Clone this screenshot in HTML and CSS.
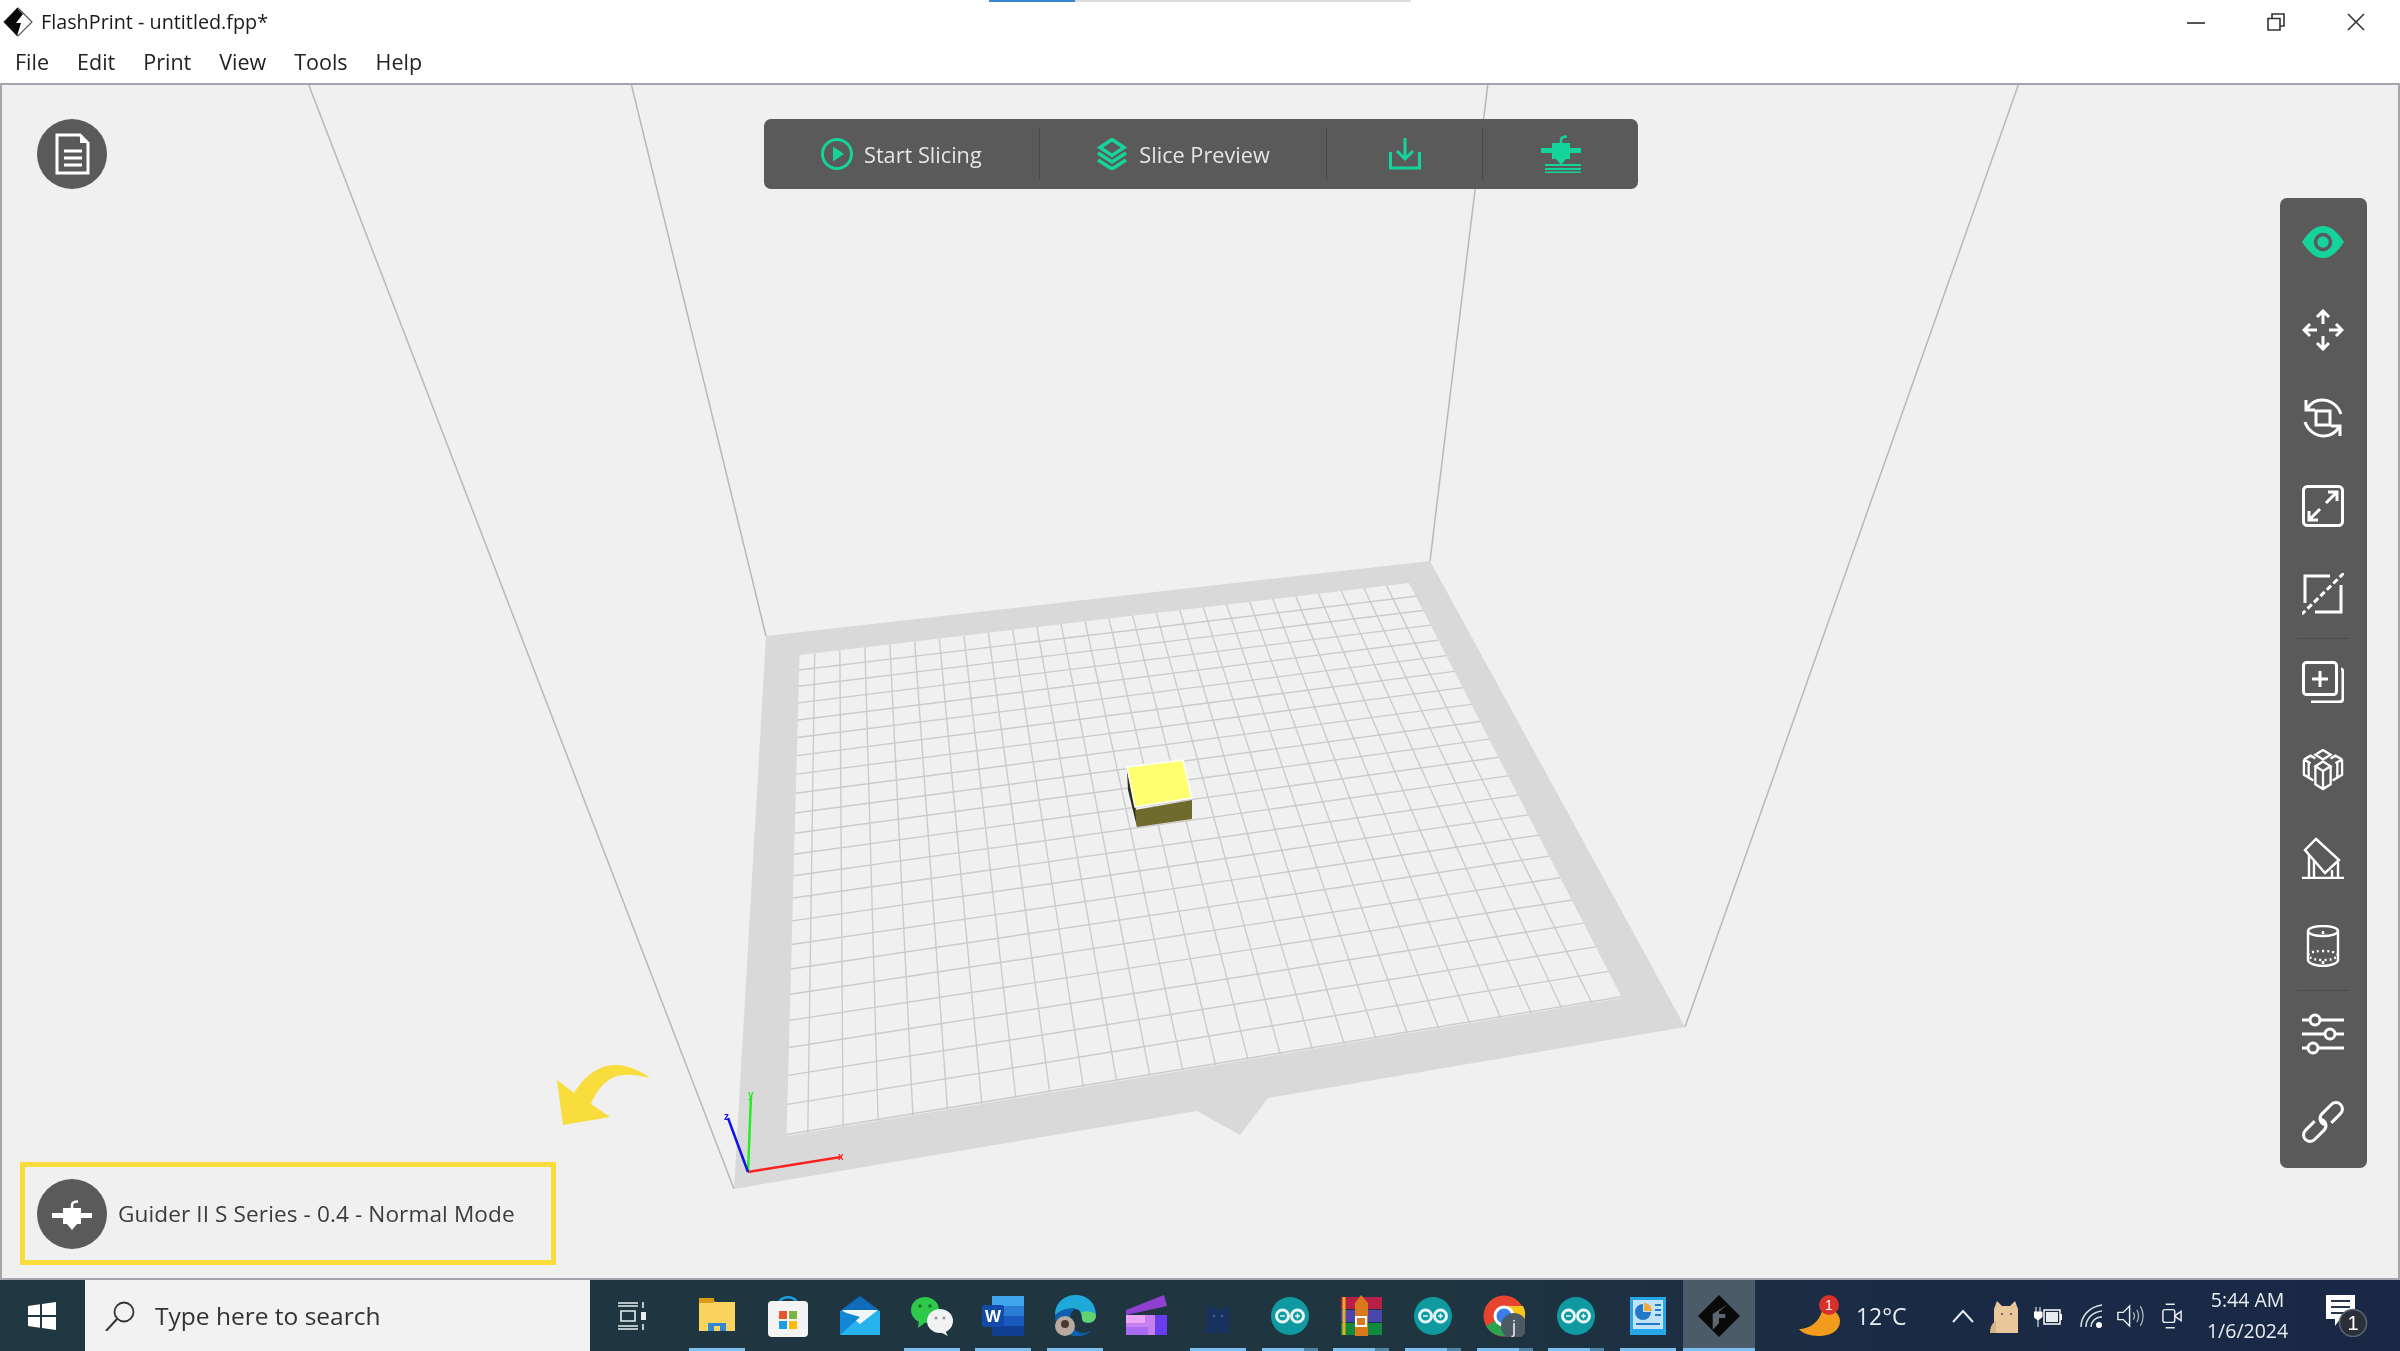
FILE: index.html
```html
<!DOCTYPE html>
<html>

<head>
    <title>FlashPrint - untitled.fpp*</title>
    <link rel="stylesheet" href="styles.css">
</head>

<body>
    <svg class="defs" width="0" height="0">
        <symbol id="nozzle" viewBox="0 0 40 30">
            <path d="M20 9V5Q20 1.500 26 1.500" fill="none" stroke="currentColor" stroke-width="2.500"/>
            <path d="M0 13H11V8H29V13H40V18H29V24H25L20 30L15 24H11V18H0Z" fill="currentColor"/>
        </symbol>
        <symbol id="arduino" viewBox="0 0 42 42">
            <circle cx="21" cy="21" r="19" fill="#0f9aa2"/>
            <g fill="none" stroke="#e6f5f5" stroke-width="3">
                <circle cx="13.500" cy="21" r="6"/>
                <circle cx="28.500" cy="21" r="6"/>
            </g>
            <path d="M11 21H16M26 21H31M28.500 18.500V23.500" stroke="#e6f5f5" stroke-width="1.500"/>
        </symbol>
        <symbol id="diamond" viewBox="0 0 40 40">
            <path d="M20 0L40 20L20 40L0 20Z" fill="#0a0a0a"/>
            <path d="M28 9L14 18V33L20 27V22H26V18H20V16Z" fill="#5a6773"/>
        </symbol>
    </svg>

    <div class="progress-strip"><span class="progress-done"></span></div>

    <header class="title-bar">
        <svg class="app-logo" viewBox="0 0 30 30">
            <path d="M15 1L29 15L15 29L1 15Z" fill="#fff" stroke="#555" stroke-width="1.200"/>
            <path d="M14 1L1 15L14 29L18 16H13L20 7Z" fill="#0a0a0a"/>
        </svg>
        <span class="app-title">FlashPrint - untitled.fpp*</span>
        <div class="window-btns">
            <svg class="window-btn" viewBox="0 0 18 18"><path d="M0 10H18" stroke="#555" stroke-width="2"/></svg>
            <svg class="window-btn" viewBox="0 0 18 18">
                <path d="M1 5.500H13V17H1ZM5 5V1H17V13H13" fill="none" stroke="#333" stroke-width="1.600"/>
            </svg>
            <svg class="window-btn" viewBox="0 0 18 18"><path d="M1 1L17 17M17 1L1 17" stroke="#333" stroke-width="1.600"/></svg>
        </div>
    </header>

    <nav class="menu-bar">
        <span class="menu-item">File</span>
        <span class="menu-item">Edit</span>
        <span class="menu-item">Print</span>
        <span class="menu-item">View</span>
        <span class="menu-item">Tools</span>
        <span class="menu-item">Help</span>
    </nav>

    <main class="viewport">
        <!-- the 3D bed, coordinates are the page's own -->
        <svg class="scene" viewBox="2 85 2396 1193">
            <g class="wall">
                <line x1="308" y1="83" x2="734" y2="1189"/>
                <line x1="631" y1="83" x2="766" y2="636"/>
                <line x1="1488" y1="83" x2="1430" y2="561"/>
                <line x1="2019" y1="83" x2="1685" y2="1027"/>
            </g>
            <polygon class="bed" points="766,636 1430,561 1685,1027 1268,1098 1240,1135 1197,1111 734,1189"/>
            <polygon class="bed-inner" points="799.500,655 1409,583 1622,998 786.500,1136"/>
            <g id="grid" class="grid"></g>

            <polygon points="1127,770 1136,810 1137,827 1128,790" fill="#2e2e18"/>
            <polygon points="1135,810 1192,800 1192,819 1137,827" fill="#6f6b2d"/>
            <polygon points="1127,767 1183,760 1192,798 1135,807" fill="#ffff70" stroke="#fff" stroke-width="1.500"/>

            <line x1="748" y1="1172" x2="841" y2="1157" stroke="#f22" stroke-width="2.500"/>
            <line x1="748" y1="1172" x2="751" y2="1096" stroke="#2e2" stroke-width="2.500"/>
            <line x1="748" y1="1172" x2="728" y2="1118" stroke="#11e" stroke-width="2.500"/>
            <text class="axis-label" x="838" y="1160" fill="#f22">x</text>
            <text class="axis-label" x="748" y="1098" fill="#2e2">y</text>
            <text class="axis-label" x="724" y="1120" fill="#11e">z</text>

            <path class="hint-arrow" d="M563 1125L557 1080L574 1093C584 1076 600 1064 617 1065C631 1066 642 1072 650 1078C638 1075 626 1073 614 1077C603 1082 596 1092 591 1104L610 1117Z"/>
        </svg>

        <div class="round-btn round-btn--doc">
            <svg class="doc-icon" viewBox="0 0 35 42">
                <path d="M2 2H25L33 10V40H2Z" fill="none" stroke="#fff" stroke-width="3"/>
                <path d="M25 2V10H33Z" fill="#fff"/>
                <path d="M9 18H27M9 25H27M9 32H27" stroke="#fff" stroke-width="3"/>
            </svg>
        </div>

        <div class="slice-bar">
            <div class="slice-item slice-item--start">
                <svg class="slice-icon" viewBox="0 0 32 32">
                    <circle cx="16" cy="16" r="14.500" fill="none" stroke="#14d49b" stroke-width="3"/>
                    <path d="M12 8.500L23 16L12 23.500Z" fill="#14d49b"/>
                </svg>
                <span>Start Slicing</span>
            </div>
            <i class="bar-sep"></i>
            <div class="slice-item slice-item--preview">
                <svg class="slice-icon" viewBox="0 0 32 32">
                    <path d="M16 1.500L28 9.500L16 17.500L4 9.500Z" fill="none" stroke="#14d49b" stroke-width="3.500"/>
                    <path d="M2 15L16 24L30 15M2 22L16 31L30 22" fill="none" stroke="#14d49b" stroke-width="3.500"/>
                </svg>
                <span>Slice Preview</span>
            </div>
            <i class="bar-sep"></i>
            <div class="slice-item slice-item--small">
                <svg class="slice-icon" viewBox="0 0 32 32">
                    <path d="M16 0V20M8 13L16 21L24 13" fill="none" stroke="#14d49b" stroke-width="3"/>
                    <path d="M1.500 14V30H30.500V14" fill="none" stroke="#14d49b" stroke-width="3"/>
                </svg>
            </div>
            <i class="bar-sep"></i>
            <div class="slice-item slice-item--small">
                <svg class="machine-icon" viewBox="0 0 40 38">
                    <use href="#nozzle" width="40" height="30"/>
                    <path d="M4 30H40M4 34H40M4 37.500H40" stroke="#14d49b" stroke-width="2"/>
                </svg>
            </div>
        </div>

        <aside class="tool-panel">
            <div class="tool">
                <svg viewBox="0 0 42 42">
                    <path d="M0 21C8 9 14 5 21 5C28 5 34 9 42 21C34 33 28 37 21 37C14 37 8 33 0 21Z" fill="#14d49b"/>
                    <circle cx="21" cy="21" r="7.500" fill="#14d49b" stroke="#5a5a5a" stroke-width="3.500"/>
                </svg>
            </div>
            <div class="tool">
                <svg class="tool-line" viewBox="0 0 42 42">
                    <path d="M21 15V2M15 8L21 2L27 8M21 27V40M15 34L21 40L27 34M15 21H2M8 15L2 21L8 27M27 21H40M34 15L40 21L34 27"/>
                </svg>
            </div>
            <div class="tool">
                <svg class="tool-line" viewBox="0 0 42 42">
                    <rect x="14" y="14" width="14" height="14"/>
                    <path d="M39 17C36 8 28 3 20 3C13 3 8 7 5 12M4 3V13H13"/>
                    <path d="M3 25C6 34 14 39 22 39C29 39 34 35 37 30M38 39V29H29"/>
                </svg>
            </div>
            <div class="tool">
                <svg class="tool-line" viewBox="0 0 42 42">
                    <rect x="1.500" y="1.500" width="39" height="39" rx="4"/>
                    <path d="M24 18L35 7M26 7H35V16M18 24L7 35M7 26V35H16"/>
                </svg>
            </div>
            <div class="tool">
                <svg class="tool-line" viewBox="0 0 42 42">
                    <path d="M28 3H3V30M13 39H39V12"/>
                    <path d="M42 0L0 41" stroke-dasharray="6 3"/>
                </svg>
            </div>
            <i class="tool-sep"></i>
            <div class="tool">
                <svg class="tool-line" viewBox="0 0 42 42">
                    <rect x="1.500" y="1.500" width="33" height="32" rx="3"/>
                    <path d="M18 10V26M10 18H26"/>
                    <path d="M39 8Q41 8 41 12V37Q41 41 37 41H9"/>
                </svg>
            </div>
            <div class="tool">
                <svg class="tool-line tool-line--thin" viewBox="0 0 42 44">
                    <path d="M21 1L29 6L21 11L13 6Z"/>
                    <path d="M21 13L29 18L21 23L13 18ZM13 18V37L21 42L29 37V18M21 23V42"/>
                    <path d="M1 11L8 7L13 10M1 11L8 15M1 11V27L11 33M6 14V30"/>
                    <path d="M41 11L34 7L29 10M41 11L34 15M41 11V27L31 33M36 14V30"/>
                </svg>
            </div>
            <div class="tool">
                <svg class="tool-line tool-line--thin" viewBox="0 0 42 42">
                    <path d="M14 2L37 23L23 36L3 13Z"/>
                    <path d="M0 41H42M7 18V41M12 23V41M30 33V41M36 25V41"/>
                </svg>
            </div>
            <div class="tool">
                <svg class="tool-line tool-line--thin" viewBox="0 0 42 42">
                    <ellipse cx="21" cy="6" rx="15" ry="5"/>
                    <path d="M6 6V35C6 38 13 41 21 41C29 41 36 38 36 35V6"/>
                    <path d="M6 30C8 27 14 26 21 26C28 26 34 27 36 30C34 34 28 35 21 35C14 35 8 34 6 30Z" stroke-dasharray="2 3"/>
                    <path d="M21 6V9M21 36V39"/>
                </svg>
            </div>
            <i class="tool-sep"></i>
            <div class="tool">
                <svg class="tool-line" viewBox="0 0 42 42">
                    <path d="M0 7H42M0 21H42M0 35H42"/>
                    <circle class="knob" cx="13" cy="7" r="5"/>
                    <circle class="knob" cx="28" cy="21" r="5"/>
                    <circle class="knob" cx="11" cy="35" r="5"/>
                </svg>
            </div>
            <div class="tool">
                <svg class="tool-line" viewBox="0 0 42 42">
                    <path transform="translate(13 29) rotate(-45)" d="M6 -6.500H-7A6.500 6.500 0 0 0 -7 6.500H7A6.500 6.500 0 0 0 12 -3"/>
                    <path transform="translate(29 13) rotate(135)" d="M6 -6.500H-7A6.500 6.500 0 0 0 -7 6.500H7A6.500 6.500 0 0 0 12 -3"/>
                </svg>
            </div>
        </aside>

        <div class="machine-chip">
            <div class="round-btn">
                <svg class="chip-nozzle"><use href="#nozzle" width="40" height="30"/></svg>
            </div>
            <span class="machine-name">Guider II S Series - 0.4 - Normal Mode</span>
        </div>
    </main>

    <footer class="taskbar">
        <div class="start-btn">
            <svg class="win-logo" viewBox="0 0 28 28">
                <path d="M0 4L12 2.300V13H0ZM14 2L28 0V13H14ZM0 15H12V25.700L0 24ZM14 15H28V28L14 26Z" fill="#fff"/>
            </svg>
        </div>
        <div class="search-box">
            <svg class="search-icon" viewBox="0 0 30 30">
                <circle cx="19" cy="11" r="9.500" fill="none" stroke="#333" stroke-width="1.800"/>
                <path d="M12 18L1 30" stroke="#333" stroke-width="2"/>
            </svg>
            <span>Type here to search</span>
        </div>
        <div class="task-view">
            <svg class="task-view-icon" viewBox="0 0 28 28">
                <path d="M0 1H20M0 4H20M0 24H20M0 27H20M3 9H17V19H3Z" fill="none" stroke="#e8eef0" stroke-width="1.600"/>
                <path d="M25 0V6M25 22V28" stroke="#e8eef0" stroke-width="1.600"/>
                <rect x="23" y="10" width="5" height="8" fill="#e8eef0"/>
            </svg>
        </div>

        <div class="task-slot task-slot--open">
            <svg viewBox="0 0 42 42">
                <path d="M3 3H16L19 7H39V36H3Z" fill="#fbd35f"/>
                <rect x="3" y="3" width="15" height="5" fill="#d99c12"/>
                <path d="M12 28H30V36H24V31H18V36H12Z" fill="#2f88d0"/>
            </svg>
        </div>
        <div class="task-slot">
            <svg viewBox="0 0 42 42">
                <path d="M12 9C12 0 30 0 30 9" fill="none" stroke="#1aa3e8" stroke-width="2.500"/>
                <rect x="1" y="6" width="40" height="36" rx="4" fill="#f4f4f4"/>
                <rect x="12" y="16" width="8" height="8" fill="#e8532b"/>
                <rect x="22" y="16" width="8" height="8" fill="#7cb342"/>
                <rect x="12" y="26" width="8" height="8" fill="#1ba1e2"/>
                <rect x="22" y="26" width="8" height="8" fill="#fbbc05"/>
            </svg>
        </div>
        <div class="task-slot">
            <svg viewBox="0 0 42 42">
                <path d="M1 16L21 1L41 16V40H1Z" fill="#0f6cbd"/>
                <path d="M1 16H41V40H1Z" fill="#27b4ee"/>
                <path d="M3 15H39L21 29Z" fill="#eef6fb"/>
                <path d="M1 40L21 22L1 16Z" fill="#1287d8"/>
            </svg>
        </div>
        <div class="task-slot task-slot--open">
            <svg viewBox="0 0 42 42">
                <ellipse cx="14" cy="15" rx="14" ry="13" fill="#2ec84a"/>
                <path d="M8 25L7 33L15 27Z" fill="#2ec84a"/>
                <ellipse cx="29" cy="26" rx="13" ry="12" fill="#f2f2f2"/>
                <path d="M34 36L37 41L29 37Z" fill="#f2f2f2"/>
                <circle cx="9" cy="11" r="1.800" fill="#157a2a"/>
                <circle cx="19" cy="11" r="1.800" fill="#157a2a"/>
                <circle cx="25" cy="23" r="1.500" fill="#999"/>
                <circle cx="33" cy="23" r="1.500" fill="#999"/>
            </svg>
        </div>
        <div class="task-slot task-slot--open">
            <svg viewBox="0 0 42 42">
                <rect x="10" y="1" width="32" height="40" rx="2" fill="#2b7cd3"/>
                <rect x="10" y="1" width="32" height="10" fill="#41a5ee"/>
                <rect x="10" y="21" width="32" height="10" fill="#185abd"/>
                <rect x="10" y="31" width="32" height="10" fill="#103f91"/>
                <rect x="0" y="10" width="22" height="22" rx="2" fill="#114aa8"/>
                <text class="word-letter" x="11" y="27">W</text>
            </svg>
        </div>
        <div class="task-slot task-slot--open">
            <svg viewBox="0 0 42 42">
                <path d="M1 20C1 8 10 0 22 0C34 0 42 9 42 20C42 27 36 29 30 27C26 25 30 16 22 14C12 12 4 18 1 20Z" fill="#1fa9d9"/>
                <path d="M42 20C42 27 36 29 30 27C27 25 29 20 27 17C34 15 40 17 42 20Z" fill="#62d26f"/>
                <path d="M1 20C4 18 12 12 22 14C16 16 14 24 18 31C22 39 32 40 38 35C32 42 20 43 11 38C4 34 1 28 1 20Z" fill="#0f5fb0"/>
                <circle cx="11" cy="31" r="10" fill="#b8aaa0"/>
                <circle cx="11" cy="29" r="4" fill="#4a3a30"/>
            </svg>
        </div>
        <div class="task-slot">
            <svg viewBox="0 0 42 42">
                <path d="M1 15L39 0L42 11L1 20Z" fill="#8f3fd1"/>
                <path d="M1 20H42V40H1Z" fill="#6a3cf0"/>
                <path d="M1 20H30V40H1Z" fill="#c77ff0"/>
                <path d="M1 20H20V28H1Z" fill="#eaa5f8"/>
                <rect x="1" y="32" width="22" height="8" fill="#a86bf2"/>
            </svg>
        </div>
        <div class="task-slot task-slot--open">
            <svg class="cat-dark" viewBox="0 0 42 42">
                <path d="M10 8L15 14H27L32 8V38H6L10 32Z" fill="#183260"/>
                <circle cx="17" cy="21" r="1" fill="#5a7bb0"/>
                <circle cx="25" cy="21" r="1" fill="#5a7bb0"/>
            </svg>
        </div>
        <div class="task-slot task-slot--stacked"><svg viewBox="0 0 42 42"><use href="#arduino"/></svg></div>
        <div class="task-slot task-slot--stacked">
            <svg viewBox="0 0 42 42">
                <rect x="1" y="2" width="41" height="12" fill="#b81f47"/>
                <rect x="1" y="15" width="41" height="12" fill="#4a46ad"/>
                <rect x="1" y="28" width="41" height="12" fill="#108a3f"/>
                <path d="M4 2V40" stroke="#e8b020" stroke-width="3"/>
                <path d="M21 0L28 8V41H15V8Z" fill="#d9791c"/>
                <rect x="16" y="22" width="10" height="9" fill="none" stroke="#fff" stroke-width="2"/>
            </svg>
        </div>
        <div class="task-slot task-slot--stacked"><svg viewBox="0 0 42 42"><use href="#arduino"/></svg></div>
        <div class="task-slot task-slot--stacked">
            <svg viewBox="0 0 42 42">
                <circle cx="21" cy="21" r="20.500" fill="#e8432e"/>
                <path d="M21 21L3 31A20.500 20.500 0 0 0 24 41Z" fill="#2ba24c"/>
                <path d="M21 11H40A20.500 20.500 0 0 1 24 41Z" fill="#fbc518"/>
                <circle cx="21" cy="21" r="9" fill="#3c7ded" stroke="#fff" stroke-width="3"/>
                <circle cx="31" cy="31" r="13" fill="#4c5a66"/>
                <text class="badge-letter" x="31" y="38">j</text>
            </svg>
        </div>
        <div class="task-slot task-slot--stacked"><svg viewBox="0 0 42 42"><use href="#arduino"/></svg></div>
        <div class="task-slot task-slot--open">
            <svg viewBox="0 0 42 42">
                <rect x="3" y="2" width="36" height="38" fill="#29a6ea"/>
                <rect x="6" y="5" width="30" height="29" fill="#bfe4f8"/>
                <path d="M16 9A8 8 0 1 0 24 17H16Z" fill="#2478c8"/>
                <path d="M17 8A8 8 0 0 1 25 16H17Z" fill="#f2a93b"/>
                <path d="M28 10H34M28 15H34M28 20H34M9 29H33" stroke="#2478c8" stroke-width="2"/>
            </svg>
        </div>
        <div class="task-slot task-slot--active"><svg viewBox="0 0 40 40"><use href="#diamond"/></svg></div>

        <div class="tray">
            <svg class="tray-weather" viewBox="0 0 42 42">
                <path d="M0 34C10 34 21 28 24 12C32 12 41 18 41 26C41 36 31 41 20 41C10 41 3 38 0 34Z" fill="#f39b1c"/>
                <circle cx="30" cy="10" r="10" fill="#d8302a"/>
                <text class="tray-badge" x="30" y="15">1</text>
            </svg>
            <span class="tray-temp">12°C</span>
            <svg class="tray-chevron" viewBox="0 0 22 14"><path d="M1 13L11 2L21 13" fill="none" stroke="#e8eef0" stroke-width="2"/></svg>
            <svg class="tray-cat" viewBox="0 0 30 34">
                <path d="M4 34V10L7 2L12 7H20L25 2L28 10V34Z" fill="#e9c79a"/>
                <path d="M0 34C0 28 2 24 6 22V34Z" fill="#d9b384"/>
                <circle cx="12" cy="15" r="1" fill="#544"/>
                <circle cx="21" cy="15" r="1" fill="#544"/>
            </svg>
            <svg class="tray-power" viewBox="0 0 28 22">
                <path d="M2 2V7M6 2V7M0 7H8V12L4 15L0 12ZM4 15V22" stroke="#fff" fill="#fff" stroke-width="1"/>
                <rect x="10" y="5" width="16" height="14" fill="none" stroke="#fff" stroke-width="1.500"/>
                <rect x="12" y="7" width="12" height="10" fill="#e8eef0"/>
                <rect x="26" y="9" width="2" height="6" fill="#fff"/>
            </svg>
            <svg class="tray-wifi" viewBox="0 0 24 24">
                <path d="M1 23C1 12 9 3 22 1M6 23C6 15 12 8 22 7M11 23C11 18 15 13 22 13" fill="none" stroke="#d8dee2" stroke-width="1.500"/>
                <circle cx="19" cy="21" r="3" fill="#fff"/>
            </svg>
            <svg class="tray-sound" viewBox="0 0 30 26">
                <path d="M1 9H7L14 2V24L7 17H1Z" fill="none" stroke="#e8eef0" stroke-width="1.600"/>
                <path d="M18 9Q21 13 18 17M22 6Q26 13 22 20M26 2Q32 13 26 24" fill="none" stroke="#aeb8c0" stroke-width="1.400"/>
            </svg>
            <svg class="tray-meet" viewBox="0 0 22 30">
                <path d="M4 2H14M4 28H14" stroke="#e8eef0" stroke-width="1.600"/>
                <rect x="1" y="8" width="13" height="14" rx="2" fill="none" stroke="#e8eef0" stroke-width="1.600"/>
                <path d="M15 14L21 10V20L15 16Z" fill="none" stroke="#e8eef0" stroke-width="1.600"/>
            </svg>
            <div class="tray-clock">
                <span>5:44 AM</span>
                <span>1/6/2024</span>
            </div>
            <div class="tray-notify">
                <svg viewBox="0 0 42 42">
                    <path d="M0 0H29V24H14L9 31V24H0Z" fill="#fff"/>
                    <path d="M5 6H24M5 12H24M5 18H24" stroke="#28384a" stroke-width="2"/>
                    <circle cx="27" cy="28" r="13.500" fill="#2a2f38" stroke="#5c6670" stroke-width="1.500"/>
                    <text class="notify-count" x="27" y="35">1</text>
                </svg>
            </div>
        </div>
    </footer>

    <script src="script.js"></script>
</body>

</html>
```

FILE: styles.css
```css
* {
    box-sizing: border-box;
}

html,
body {
    margin: 0;
    width: 2400px;
    height: 1351px;
    overflow: hidden;
}

body {
    display: flex;
    flex-direction: column;
    position: relative;
    background: #fff;
    font-family: "Open Sans", "Noto Sans", sans-serif;
    color: #222;
    /* the screenshot is an upscaled one, everything is a bit soft */
    filter: blur(0.5px);
}

.defs {
    position: absolute;
}

.progress-strip {
    position: absolute;
    top: 0;
    left: 989px;
    width: 422px;
    height: 2px;
    background: #dcdcdc;
}

.progress-done {
    display: block;
    width: 86px;
    height: 2px;
    background: #3b86d0;
}

/* title and menu */
.title-bar {
    display: flex;
    align-items: center;
    height: 43px;
    padding-left: 3px;
}

.app-logo {
    width: 30px;
    height: 30px;
    margin-right: 8px;
}

.app-title {
    font-size: 19.800px;
    color: #1a1a1a;
}

.window-btns {
    display: flex;
    gap: 62px;
    margin-left: auto;
    margin-right: 35px;
}

.window-btn {
    width: 18px;
    height: 18px;
}

.menu-bar {
    display: flex;
    gap: 28px;
    height: 40px;
    padding-left: 15px;
    font-size: 21.500px;
    line-height: 38px;
}

/* viewport */
.viewport {
    position: relative;
    flex: 1;
    background: #f0f0f0;
    border: 2px solid #a2a6ac;
}

.scene {
    position: absolute;
    top: 0;
    left: 0;
    width: 2396px;
    height: 1193px;
}

.wall line {
    stroke: #b8b8b8;
    stroke-width: 1.500;
}

.bed {
    fill: #d9d9d9;
}

.bed-inner {
    fill: #f0f0f0;
}

.grid line {
    stroke: #cbcbcb;
    stroke-width: 1.400;
}

.axis-label {
    font-size: 10px;
    font-weight: bold;
    font-family: "Liberation Sans", sans-serif;
}

.hint-arrow {
    fill: #f8dd3c;
}

.round-btn {
    display: flex;
    align-items: center;
    justify-content: center;
    width: 70px;
    height: 70px;
    border-radius: 50%;
    background: #5a5a5a;
    flex: none;
}

.round-btn--doc {
    position: absolute;
    left: 35px;
    top: 34px;
}

.doc-icon {
    width: 35px;
    height: 42px;
}

.slice-bar {
    position: absolute;
    left: 762px;
    top: 34px;
    display: flex;
    align-items: center;
    width: 874px;
    height: 70px;
    border-radius: 7px;
    background: #5a5a5a;
    color: #e6e6e6;
    font-size: 21.700px;
}

.slice-item {
    display: flex;
    align-items: center;
    justify-content: center;
    gap: 11px;
    height: 100%;
}

.slice-item span {
    margin-top: 1px;
}

.slice-item--start {
    width: 275px;
}

.slice-item--preview {
    width: 287px;
}

.slice-item--small {
    width: 155px;
}

.slice-icon {
    width: 32px;
    height: 32px;
}

.machine-icon {
    width: 40px;
    height: 38px;
}

.bar-sep {
    flex: none;
    width: 1px;
    height: 52px;
    background: #4a4a4a;
}

.tool-panel {
    position: absolute;
    right: 31px;
    top: 113px;
    width: 87px;
    height: 970px;
    padding-right: 1px;
    border-radius: 7px;
    background: #5a5a5a;
}

.tool {
    display: flex;
    align-items: center;
    justify-content: center;
    height: 88px;
}

.tool svg {
    width: 42px;
    height: 42px;
}

.tool-line {
    fill: none;
    stroke: #fff;
    stroke-width: 3;
}

.tool-line--thin {
    stroke-width: 2.400;
}

.knob {
    fill: #5a5a5a;
}

.tool-sep {
    display: block;
    height: 1px;
    margin: 0 17px -1px;
    background: #4c4c4c;
}

.machine-chip {
    position: absolute;
    left: 18px;
    top: 1077px;
    display: flex;
    align-items: center;
    gap: 11px;
    width: 536px;
    height: 103px;
    padding-left: 12px;
    border: 5.500px solid #f8dd3c;
}

.chip-nozzle {
    width: 40px;
    height: 30px;
    color: #fff;
    margin-top: 2px;
}

.machine-name {
    font-size: 22.600px;
    letter-spacing: 0.100px;
    color: #3c3c3c;
}

.machine-icon,
.slice-icon {
    color: #14d49b;
}

/* taskbar */
.taskbar {
    display: flex;
    align-items: center;
    height: 71px;
    background: linear-gradient(90deg, #1f3841 0%, #1f3540 60%, #1a2a45 80%, #1a2845 100%);
}

.start-btn {
    display: flex;
    align-items: center;
    width: 85px;
    height: 100%;
    padding-left: 28px;
}

.win-logo {
    width: 28px;
    height: 28px;
}

.search-box {
    display: flex;
    align-items: center;
    gap: 20px;
    width: 505px;
    height: 100%;
    padding-left: 20px;
    background: #f2f2f2;
    color: #333;
    font-size: 24.500px;
}

.search-icon {
    width: 30px;
    height: 30px;
}

.task-view {
    display: flex;
    align-items: center;
    width: 91px;
    padding-left: 28px;
}

.task-view-icon {
    width: 28px;
    height: 28px;
}

.task-slot {
    position: relative;
    display: flex;
    align-items: center;
    justify-content: center;
    flex: none;
    width: 71.600px;
    height: 100%;
}

.task-slot svg {
    width: 42px;
    height: 42px;
}

.task-slot--open::after,
.task-slot--stacked::after {
    content: "";
    position: absolute;
    left: 8px;
    bottom: 0;
    width: 56px;
    height: 3px;
    background: #7cc0ef;
}

.task-slot--stacked::after {
    background: linear-gradient(90deg, #7cc0ef 75%, #4f86a8 75%);
}

.task-slot--active {
    background: #4c5b68;
}

.task-slot--active::after {
    content: "";
    position: absolute;
    left: 0;
    bottom: 0;
    width: 100%;
    height: 3px;
    background: #7cc0ef;
}

.cat-dark {
    width: 36px;
}

.word-letter {
    fill: #fff;
    font-size: 17px;
    font-weight: bold;
    text-anchor: middle;
    font-family: "Liberation Sans", sans-serif;
}

.badge-letter {
    fill: #e8e8e8;
    font-size: 18px;
    text-anchor: middle;
    font-family: "Liberation Sans", sans-serif;
}

.tray {
    display: flex;
    align-items: center;
    height: 100%;
    color: #e8eef0;
}

.tray-weather {
    width: 42px;
    height: 42px;
    margin-left: 44px;
}

.tray-badge {
    fill: #fff;
    font-size: 14px;
    text-anchor: middle;
    font-family: "Liberation Sans", sans-serif;
}

.tray-temp {
    margin-left: 15px;
    font-size: 23px;
}

.tray-chevron {
    width: 22px;
    height: 14px;
    margin-left: 45px;
}

.tray-cat {
    width: 30px;
    height: 34px;
    margin-left: 16px;
}

.tray-power {
    width: 28px;
    height: 22px;
    margin-left: 14px;
}

.tray-wifi {
    width: 24px;
    height: 24px;
    margin-left: 18px;
}

.tray-sound {
    width: 27px;
    height: 24px;
    margin-left: 13px;
}

.tray-meet {
    width: 20px;
    height: 30px;
    margin-left: 18px;
}

.tray-clock {
    display: flex;
    flex-direction: column;
    align-items: center;
    gap: 5px;
    width: 80px;
    margin-left: 26px;
    font-size: 19.500px;
    line-height: 26px;
}

.tray-notify {
    margin-left: 38px;
    width: 42px;
    height: 42px;
}

.notify-count {
    fill: #fff;
    font-size: 20px;
    text-anchor: middle;
    font-family: "Liberation Sans", sans-serif;
}
```

FILE: script.js
```js
// Bed grid: map the unit square on to the inner corners of the bed in perspective
const back_left = [799.5, 655];
const back_right = [1409, 583];
const front_right = [1622, 998];
const front_left = [786.5, 1136];

function makeMapper(p0, p1, p2, p3) {
    const dx1 = p1[0] - p2[0];
    const dx2 = p3[0] - p2[0];
    const dx3 = p0[0] - p1[0] + p2[0] - p3[0];
    const dy1 = p1[1] - p2[1];
    const dy2 = p3[1] - p2[1];
    const dy3 = p0[1] - p1[1] + p2[1] - p3[1];
    const det = dx1 * dy2 - dx2 * dy1;
    const g = (dx3 * dy2 - dx2 * dy3) / det;
    const h = (dx1 * dy3 - dx3 * dy1) / det;
    const a = p1[0] - p0[0] + g * p1[0];
    const b = p3[0] - p0[0] + h * p3[0];
    const d = p1[1] - p0[1] + g * p1[1];
    const e = p3[1] - p0[1] + h * p3[1];

    return (u, v) => {
        const w = g * u + h * v + 1;
        return [(a * u + b * v + p0[0]) / w, (d * u + e * v + p0[1]) / w];
    };
}

const map = makeMapper(back_left, back_right, front_right, front_left);
const grid = document.getElementById("grid");

function addLine(from, to) {
    const line = document.createElementNS("http://www.w3.org/2000/svg", "line");
    line.setAttribute("x1", from[0]);
    line.setAttribute("y1", from[1]);
    line.setAttribute("x2", to[0]);
    line.setAttribute("y2", to[1]);
    grid.appendChild(line);
}

for (let i = 0; i < 25; i++) {
    const u = (i + 0.6) / 25.6;
    addLine(map(u, 0), map(u, 1));
}

for (let j = 0; j < 22; j++) {
    const v = (j + 0.95) / 22;
    addLine(map(0, v), map(1, v));
}
```
